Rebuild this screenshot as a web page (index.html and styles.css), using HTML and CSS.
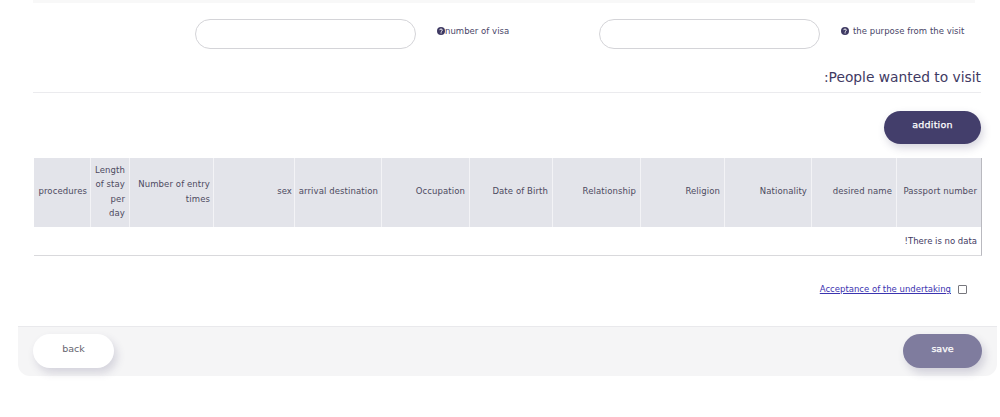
FILE: index.html
```html
<!DOCTYPE html>
<html lang="en">
<head>
<meta charset="utf-8">
<title>Visa request</title>
<link rel="stylesheet" href="styles.css">
</head>
<body>
<div class="page">
  <div class="top-strip"></div>
  <div class="fields">
    <input class="field" type="text">
    <label class="field-label first-label"><svg class="help" viewBox="0 0 16 16"><circle cx="8" cy="8" r="8"/><path d="M5.4 6.2C5.5 4.7 6.6 4 8 4c1.500 0 2.700.8 2.700 2.200 0 1.900-2.200 1.800-2.200 3.300" fill="none" stroke="#fff" stroke-width="1.900"/><rect x="7.100" y="10.700" width="2.200" height="2.100" fill="#fff"/></svg>number of visa</label>
    <input class="field" type="text">
    <label class="field-label"><svg class="help spaced" viewBox="0 0 16 16"><circle cx="8" cy="8" r="8"/><path d="M5.4 6.200C5.500 4.700 6.600 4 8 4c1.500 0 2.700.8 2.700 2.200 0 1.900-2.200 1.800-2.200 3.300" fill="none" stroke="#fff" stroke-width="1.900"/><rect x="7.100" y="10.700" width="2.200" height="2.100" fill="#fff"/></svg>the purpose from the visit</label>
  </div>
  <h2 class="section-title">:People wanted to visit</h2>
  <div class="actions"><button class="btn btn-add" type="button">addition</button></div>
  <table class="data">
    <colgroup>
      <col class="c1"><col class="c2"><col class="c3"><col class="c4"><col class="c5"><col class="c6"><col class="c7"><col class="c8"><col class="c9"><col class="c10"><col class="c11"><col class="c12">
    </colgroup>
    <thead>
      <tr>
        <th class="tight">procedures</th>
        <th>Length of stay per day</th>
        <th class="tight">Number of entry times</th>
        <th class="tighter">sex</th>
        <th class="tight">arrival destination</th>
        <th>Occupation</th>
        <th>Date of Birth</th>
        <th>Relationship</th>
        <th>Religion</th>
        <th>Nationality</th>
        <th>desired name</th>
        <th>Passport number</th>
      </tr>
    </thead>
    <tbody>
      <tr><td colspan="12">!There is no data</td></tr>
    </tbody>
  </table>
  <div class="undertaking">
    <a href="#">Acceptance of the undertaking</a>
    <input class="check" type="checkbox">
  </div>
  <div class="footer">
    <button class="btn btn-back" type="button">back</button>
    <button class="btn btn-save" type="button">save</button>
  </div>
</div>
</body>
</html>
```
FILE: styles.css
```css
* { box-sizing: border-box; }
html, body { margin: 0; padding: 0; background: #fff; }
body {
  font-family: "DejaVu Sans", sans-serif;
  font-size: 8.5px;
  color: #3f3a63;
  overflow: hidden;
  height: 417px;
}
.page { width: 1000px; }
.top-strip { height: 3px; margin: 0 25px 0 33px; background: #f8f8f8; }
.fields { display: flex; align-items: center; margin-top: 16px; padding-left: 195px; height: 30px; }
.field {
  width: 221px; height: 30px; border: 1px solid #d4d4d8; border-radius: 15px;
  background: #fff; outline: none; flex: none;
}
.field-label { display: flex; align-items: center; margin: 0 0 6px 21px; font-size: 8.5px; letter-spacing: .03px; color: #4a4668; white-space: nowrap; }
.first-label { width: 162px; }
.help { width: 8px; height: 8px; fill: #3f3a63; flex: none; }
.spaced { margin-right: 4px; }
.section-title {
  margin: 19px 19px 0 33px; padding-bottom: 6px; height: 25px;
  border-bottom: 1px solid #ebebee; text-align: right;
  font-size: 13.8px; line-height: 19px; font-weight: 400; color: #3f3a63;
}
.actions { display: flex; justify-content: flex-end; margin: 18px 19px 0 0; }
.btn {
  border: 0; border-radius: 17px; font-family: inherit; font-size: 9.5px; cursor: pointer;
  padding: 0 0 6px;
}
.btn-add {
  width: 97px; height: 33px; background: #433e6b; color: #fff; font-size: 9.5px; letter-spacing: .2px;
  -webkit-text-stroke: .25px #fff;
  box-shadow: 2px 4px 8px rgba(67, 62, 107, .22);
}
.data {
  table-layout: fixed; border-collapse: separate; border-spacing: 0;
  width: 948px; margin: 14px 0 0 34px; border-right: 1px solid #b9b9bf; border-bottom: 1px solid #d9d9dc;
  font-size: 8.5px; letter-spacing: .1px;
}
.c1 { width: 57px; } .c2 { width: 39px; } .c3 { width: 84px; } .c4 { width: 81px; }
.c5 { width: 87px; } .c6 { width: 88px; } .c7 { width: 83px; } .c8 { width: 88px; }
.c9 { width: 84px; } .c10 { width: 87px; } .c11 { width: 85px; } .c12 { width: 84px; }
th {
  height: 69px; padding: 0 4px 2px 2px; background: #e3e4ea; color: #4d4a5f; font-weight: 400; text-align: right;
  line-height: 14.3px; border-right: 1px solid #f3f3f6;
}
th.tight { padding-right: 3px; }
th.tighter { padding-right: 2px; }
th:last-child { border-right: 0; }
td { height: 28px; padding: 0 4px; text-align: right; color: #3f3a63; background: #fff; letter-spacing: 0; }
.undertaking { display: flex; align-items: center; justify-content: flex-end; margin: 28px 33px 0 0; height: 10px; }
.undertaking a { color: #3b34b0; }
.check {
  appearance: none; width: 9px; height: 9px; margin: 0 0 0 7px; background: #fff;
  border: 1px solid #77777d; border-radius: 1px; flex: none;
}
.footer {
  display: flex; justify-content: space-between; align-items: flex-start;
  width: 979px; height: 50px; margin: 32px 0 0 18px; padding: 7px 15px 0;
  background: #f5f5f6; border-top: 1px solid #e9e9ec; border-radius: 0 0 12px 12px;
}
.btn-back {
  width: 81px; height: 34px; background: #fff; color: #66646f;
  box-shadow: 3px 5px 9px rgba(67, 62, 107, .18);
}
.btn-save {
  width: 79px; height: 34px; background: #7f7c9e; color: #fff;
  -webkit-text-stroke: .25px #fff;
  box-shadow: 3px 5px 9px rgba(67, 62, 107, .2);
}
```
